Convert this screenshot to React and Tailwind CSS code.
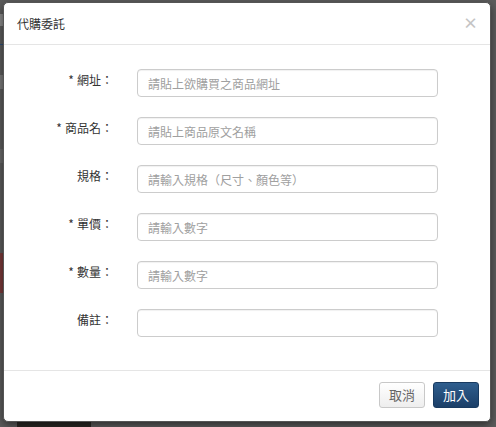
import React from 'react';

const fields = [
  { label: '網址', required: true, placeholder: '請貼上欲購買之商品網址' },
  { label: '商品名', required: true, placeholder: '請貼上商品原文名稱' },
  { label: '規格', required: false, placeholder: '請輸入規格（尺寸、顏色等）' },
  { label: '單價', required: true, placeholder: '請輸入數字' },
  { label: '數量', required: true, placeholder: '請輸入數字' },
  { label: '備註', required: false, placeholder: '' },
];

const font = { fontFamily: '"Noto Sans CJK TC", "Liberation Sans", sans-serif' };

export default function App() {
  return (
    <div className="relative w-[496px] h-[427px] overflow-hidden bg-[#5c5c5c]" style={font}>
      {/* dimmed page behind the dialog */}
      <div className="flex flex-col pt-[14px] w-[6px]">
        <div className="h-[12px] bg-[#8a8a8a]" />
        <div className="mt-[18px] h-[1px] bg-[#2c4c78]" />
        <div className="mt-[30px] h-[14px] bg-[#7a7a7a]" />
        <div className="mt-[60px] h-[14px] bg-[#6a6a6a]" />
        <div className="mt-[90px] h-[40px] bg-[#7a3a3a]" />
      </div>
      <div className="absolute left-[17px] top-[421px] w-[74px] h-[6px] bg-[#2a2824]" />

      {/* dialog */}
      <div className="absolute left-[3px] top-[2px] w-[488px] h-[420px] bg-white rounded-[5px] shadow-[0_3px_9px_rgba(0,0,0,0.5)] border border-[#555] flex flex-col">
        <div className="h-[42px] flex items-center justify-between px-[12px] border-b border-[#e5e5e5]">
          <h4 className="text-[12px] text-[#333] leading-none pl-[1px]">代購委託</h4>
          <button className="text-[15px] font-bold text-[#c4c4c4] leading-none pb-[2px]">×</button>
        </div>

        <div className="flex-1 flex flex-col gap-[20px] pt-[24px]">
          {fields.map((f) => (
            <div key={f.label} className="flex items-start">
              <label className="w-[109px] text-right pt-[2px] text-[12px] leading-[18px] text-[#333] whitespace-nowrap">
                {f.required && <span className="mr-[3px]">*</span>}
                {f.label}：
              </label>
              <input
                className="ml-[24px] w-[301px] h-[28px] rounded-[4px] border border-[#ccc] px-[10px] text-[12px] text-[#555] placeholder:text-[#a0a0a0] outline-none shadow-[inset_0_1px_1px_rgba(0,0,0,0.06)]"
                placeholder={f.placeholder}
              />
            </div>
          ))}
        </div>

        <div className="h-[51px] border-t border-[#e5e5e5] flex items-start justify-end gap-[8px] pt-[11px] pr-[11px]">
          <button className="w-[46px] h-[26px] rounded-[3px] border border-[#c8c8c8] bg-gradient-to-b from-white to-[#eeeeee] text-[13px] text-[#666]">
            取消
          </button>
          <button className="w-[46px] h-[26px] rounded-[3px] border border-[#183a60] bg-gradient-to-b from-[#2f5e8e] to-[#1b3f68] text-[13px] text-white">
            加入
          </button>
        </div>
      </div>
    </div>
  );
}
